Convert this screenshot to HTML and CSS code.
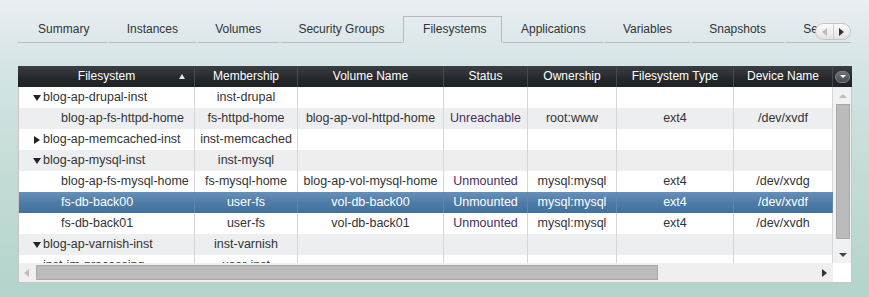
FILE: index.html
```
<!DOCTYPE html>
<html>
<head>
<meta charset="utf-8">
<link rel="stylesheet" href="styles.css">
</head>
<body>
<div class="tabbar">
  <div class="tabs">
    <div class="tab-lead"></div>
    <div class="tab">Summary</div>
    <div class="tab">Instances</div>
    <div class="tab">Volumes</div>
    <div class="tab">Security Groups</div>
    <div class="tab active">Filesystems</div>
    <div class="tab">Applications</div>
    <div class="tab">Variables</div>
    <div class="tab">Snapshots</div>
    <div class="tab">Services</div>
    <div class="tab">Events</div>
  </div>
  <div class="scroller">
    <span class="sc-btn"><span class="tri-left dim"></span></span>
    <span class="sc-btn sc-right"><span class="tri-right"></span></span>
  </div>
</div>

<div class="panel">
  <div class="header">
    <div class="hcell sorted">Filesystem<span class="sort-arrow"></span></div>
    <div class="hcell">Membership</div>
    <div class="hcell">Volume Name</div>
    <div class="hcell">Status</div>
    <div class="hcell">Ownership</div>
    <div class="hcell">Filesystem Type</div>
    <div class="hcell">Device Name</div>
    <div class="hmenu"><span class="menu-btn"><span class="tri-down small"></span></span></div>
  </div>
  <div class="body">
    <div class="rows">
      <div class="row">
        <div class="cell group"><span class="tri-down"></span>blog-ap-drupal-inst</div>
        <div class="cell">inst-drupal</div><div class="cell"></div><div class="cell"></div><div class="cell"></div><div class="cell"></div><div class="cell"></div>
      </div>
      <div class="row alt">
        <div class="cell child">blog-ap-fs-httpd-home</div>
        <div class="cell">fs-httpd-home</div><div class="cell">blog-ap-vol-httpd-home</div><div class="cell status">Unreachable</div><div class="cell">root:www</div><div class="cell">ext4</div><div class="cell">/dev/xvdf</div>
      </div>
      <div class="row">
        <div class="cell group"><span class="tri-right-row"></span>blog-ap-memcached-inst</div>
        <div class="cell">inst-memcached</div><div class="cell"></div><div class="cell"></div><div class="cell"></div><div class="cell"></div><div class="cell"></div>
      </div>
      <div class="row alt">
        <div class="cell group"><span class="tri-down"></span>blog-ap-mysql-inst</div>
        <div class="cell">inst-mysql</div><div class="cell"></div><div class="cell"></div><div class="cell"></div><div class="cell"></div><div class="cell"></div>
      </div>
      <div class="row">
        <div class="cell child">blog-ap-fs-mysql-home</div>
        <div class="cell">fs-mysql-home</div><div class="cell">blog-ap-vol-mysql-home</div><div class="cell status">Unmounted</div><div class="cell">mysql:mysql</div><div class="cell">ext4</div><div class="cell">/dev/xvdg</div>
      </div>
      <div class="row selected">
        <div class="cell child">fs-db-back00</div>
        <div class="cell">user-fs</div><div class="cell">vol-db-back00</div><div class="cell status">Unmounted</div><div class="cell">mysql:mysql</div><div class="cell">ext4</div><div class="cell">/dev/xvdf</div>
      </div>
      <div class="row">
        <div class="cell child">fs-db-back01</div>
        <div class="cell">user-fs</div><div class="cell">vol-db-back01</div><div class="cell status">Unmounted</div><div class="cell">mysql:mysql</div><div class="cell">ext4</div><div class="cell">/dev/xvdh</div>
      </div>
      <div class="row alt">
        <div class="cell group"><span class="tri-down"></span>blog-ap-varnish-inst</div>
        <div class="cell">inst-varnish</div><div class="cell"></div><div class="cell"></div><div class="cell"></div><div class="cell"></div><div class="cell"></div>
      </div>
      <div class="row">
        <div class="cell group"><span class="tri-down"></span>inst-im-processing</div>
        <div class="cell">user-inst</div><div class="cell"></div><div class="cell"></div><div class="cell"></div><div class="cell"></div><div class="cell"></div>
      </div>
    </div>
    <div class="vscroll">
      <span class="tri-up dim"></span>
      <div class="vthumb"></div>
      <span class="tri-down small dark"></span>
    </div>
  </div>
  <div class="hbar">
    <div class="htrack">
      <span class="tri-left dim"></span>
      <div class="hthumb"></div>
      <span class="tri-right"></span>
    </div>
    <div class="corner"></div>
  </div>
</div>
</body>
</html>
```

FILE: styles.css
```
* { box-sizing: border-box; }
html, body { margin: 0; padding: 0; }
body {
  width: 869px;
  height: 297px;
  overflow: hidden;
  font-family: "Liberation Sans", Arial, sans-serif;
  font-size: 12px;
  color: #333;
  background: linear-gradient(to bottom, #e9eef1 0%, #d5e4e5 22%, #c3dbd6 60%, #b2d4cc 100%);
}

/* ---------- tabs ---------- */
.tabbar {
  position: relative;
  margin: 16px 0 0 18px;
  width: 833px;
  height: 27px;
}
.tabs {
  display: flex;
  width: 833px;
  height: 27px;
  overflow: hidden;
}
.tab-lead {
  flex: 0 0 1.5px;
  border-bottom: 1px solid #bcbcbf;
}
.tab {
  flex: 0 0 auto;
  height: 27px;
  padding: 0 17.6px;
  line-height: 24px;
  border: 1px solid transparent;
  border-bottom: 1px solid #bcbcbf;
  color: #333;
  white-space: nowrap;
}
.tab.active {
  border-color: #b9b9bc;
  border-bottom-color: transparent;
  padding-right: 15px;
  padding-left: 19px;
}
.scroller {
  position: absolute;
  right: 0;
  top: 7px;
  width: 36px;
  height: 17px;
  display: flex;
  border: 1px solid #c4c4c4;
  border-radius: 9px;
  background: linear-gradient(to bottom, #fbfbfb, #e3e3e3);
  overflow: hidden;
}
.sc-btn {
  flex: 1 1 0;
  display: flex;
  align-items: center;
  justify-content: center;
}
.sc-right { border-left: 1px solid #cfcfcf; }

/* triangles */
.tri-left, .tri-right, .tri-up, .tri-down, .tri-right-row {
  display: inline-block;
  width: 0; height: 0;
}
.tri-left { border-top: 4px solid transparent; border-bottom: 4px solid transparent; border-right: 5px solid #333; }
.tri-right { border-top: 4px solid transparent; border-bottom: 4px solid transparent; border-left: 5px solid #333; }
.tri-up { border-left: 4px solid transparent; border-right: 4px solid transparent; border-bottom: 4px solid #333; }
.tri-down { border-left: 4px solid transparent; border-right: 4px solid transparent; border-top: 6px solid #222; }
.tri-down.small { border-top-width: 4px; }
.tri-right-row { border-top: 4px solid transparent; border-bottom: 4px solid transparent; border-left: 6px solid #222; margin: 0 3px 0 1px; }
.dim.tri-left { border-right-color: #bdbdbd; }
.dim.tri-up { border-bottom-color: #bdbdbd; }
.dark.tri-down { border-top-color: #444; }

/* ---------- panel ---------- */
.panel {
  margin: 23px 0 0 18px;
  width: 834px;
  height: 217px;
  background: #fff;
  border: 1px solid #c6c6c6;
  border-top: 0;
  display: flex;
  flex-direction: column;
}
.header, .row {
  display: grid;
  grid-template-columns: 176px 103px 146px 84px 89px 117px 99px;
}
.header {
  grid-template-columns: 176px 103px 146px 84px 89px 117px 99px 18px;
  height: 21px;
  margin: 0 -1px;
  padding-left: 1px;
  background: linear-gradient(to bottom, #3b3f43, #25282b 60%, #1f2225);
}
.hcell {
  position: relative;
  color: #fff;
  text-align: center;
  line-height: 21px;
  border-right: 1px solid #45494d;
  white-space: nowrap;
}
.sort-arrow {
  position: absolute;
  right: 9px;
  top: 8px;
  width: 0; height: 0;
  border-left: 3px solid transparent;
  border-right: 3px solid transparent;
  border-bottom: 5px solid #e8e8e8;
}
.hmenu {
  display: flex;
  align-items: center;
  padding-left: 2px;
}
.menu-btn {
  width: 15px;
  height: 12px;
  border-radius: 6px;
  background: linear-gradient(to bottom, #6d7074, #4a4d51);
  border: 1px solid #7c7f83;
  display: flex;
  align-items: center;
  justify-content: center;
}
.menu-btn .tri-down { border-top-color: #fff; border-left-width: 3px; border-right-width: 3px; border-top-width: 3px; }

.body {
  display: flex;
  height: 176px;
}
.rows {
  width: 814px;
  height: 176px;
  overflow: hidden;
  font-size: 12.5px;
}
.row {
  height: 21px;
  line-height: 21px;
  background: #fff;
}
.row.alt { background: #edeef0; }
.cell {
  border-right: 1px solid #d6d6d6;
  text-align: center;
  white-space: nowrap;
  overflow: hidden;
  color: #333;
}
.cell.group {
  text-align: left;
  padding-left: 14px;
  display: flex;
  align-items: center;
}
.cell.group .tri-down { margin-right: 2px; margin-top: 1px; }
.cell.child { text-align: left; padding-left: 42px; }
.cell.status { color: #4a2c5c; }
.row.selected {
  background: linear-gradient(to bottom, #6690b9, #4f7ca7 50%, #42709c);
}
.row.selected .cell {
  color: #fff;
  border-right-color: #5e87ae;
}

.vscroll {
  width: 18px;
  height: 176px;
  background: #f0f1f2;
  display: flex;
  flex-direction: column;
  align-items: center;
}
.vscroll .tri-up { margin-top: 7px; margin-left: 1px; }
.vthumb {
  width: 14px;
  height: 135px;
  margin-top: 6px;
  margin-left: 1px;
  background: #bbbbbb;
  border: 1px solid #a9a9a9;
}
.vscroll .tri-down { margin-top: 14px; margin-left: 1px; }

.hbar {
  display: flex;
  height: 19px;
}
.htrack {
  width: 814px;
  height: 19px;
  background: #efeff0;
  display: flex;
  align-items: center;
  padding: 0 0 0 5px;
}
.hthumb {
  width: 622px;
  height: 15px;
  margin-left: 7px;
  background: #bbbbbb;
  border: 1px solid #a9a9a9;
}
.htrack .tri-right { margin-left: 164px; }
.corner {
  width: 18px;
  height: 19px;
  background: #fff;
}
```
